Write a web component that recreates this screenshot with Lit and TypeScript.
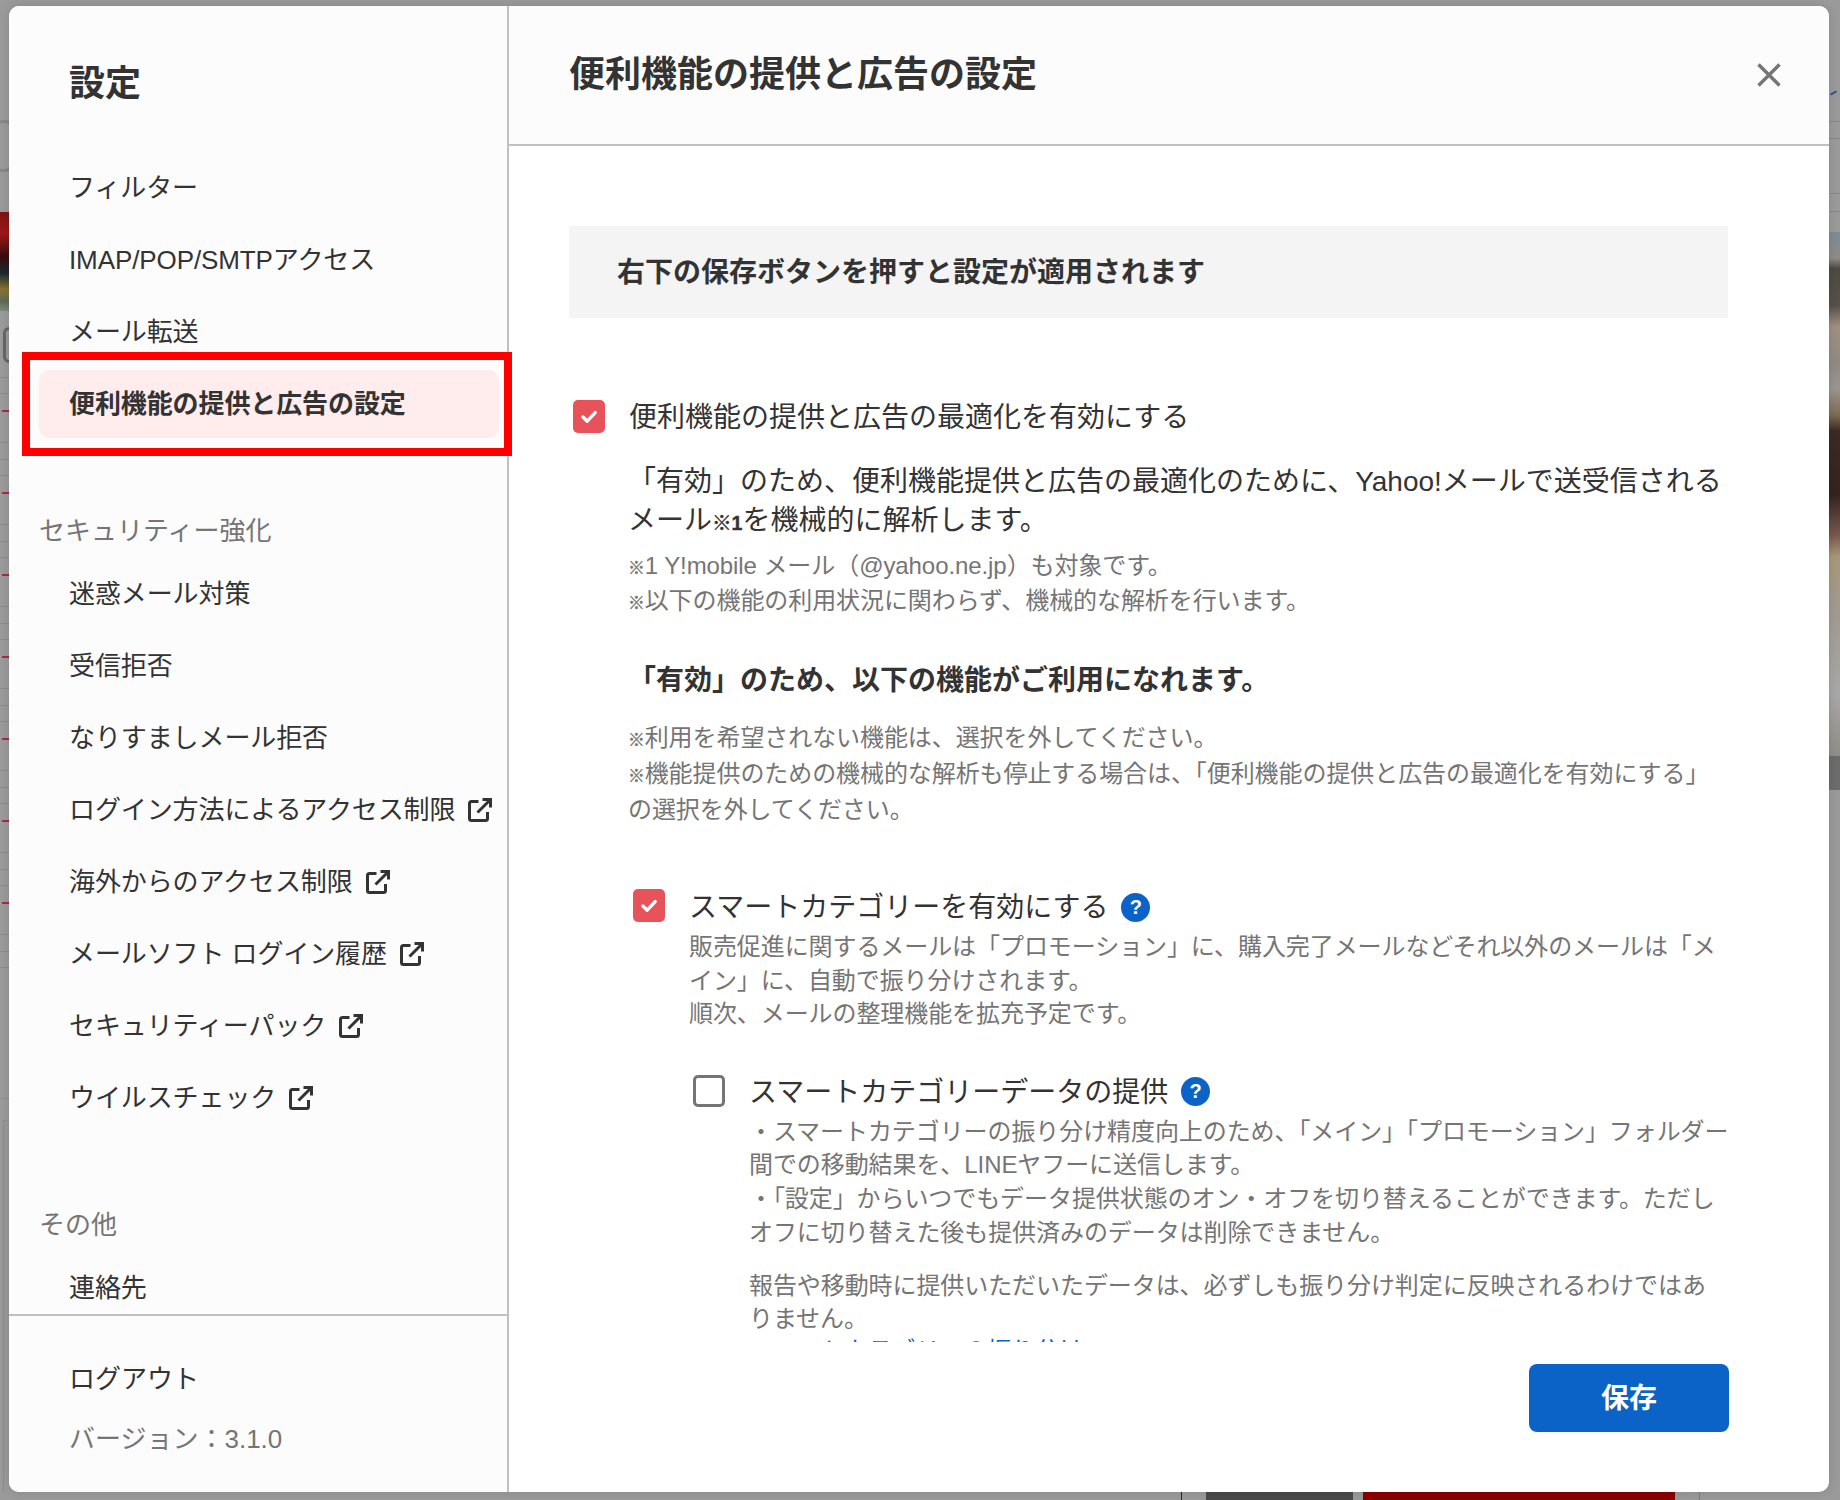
import { LitElement, html, css, svg } from "lit";
import { customElement } from "lit/decorators.js";

const extIcon = html`<svg class="ext" viewBox="0 0 24 25" width="24" height="25" fill="none" stroke="#333" stroke-width="3" aria-hidden="true">${svg`
  <path d="M10.5 4.5H3.5a2 2 0 0 0-2 2V21.5a2 2 0 0 0 2 2H17.5a2 2 0 0 0 2-2V15"/>
  <path d="M9.5 15.5 21.5 3.5"/>
  <path d="M14.5 2.5H22.5V10.5"/>`}</svg>`;

const check = html`<svg viewBox="0 0 32 33" width="32" height="33" fill="none" stroke="#fff" stroke-width="3.4" stroke-linecap="round" stroke-linejoin="round" aria-hidden="true">${svg`<path d="M10 17l4.2 4.2 8-8.6"/>`}</svg>`;

const help = html`<span class="help">?</span>`;

const k = (t: string) => html`<span class="kome">${t}</span>`;

@customElement("app-root")
export class AppRoot extends LitElement {
  static styles = css`
    :host {
      display: block;
      position: relative;
      width: 1840px;
      height: 1500px;
      overflow: hidden;
      background: #9a9a9a;
      font-family: "Liberation Sans", "Noto Sans CJK JP", sans-serif;
      color: #333;
    }
    /* dimmed page behind the dialog */
    .bg { position: absolute; }
    .bg-btn1 { left: -6px; top: 120px; width: 13px; height: 46px; border: 3px solid #868686; border-radius: 8px; }
    .bg-thumb {
      left: 0; top: 212px; width: 9px; height: 99px;
      background: linear-gradient(#7c1414 0%, #a01818 22%, #3a0c0c 45%, #1b2a30 62%, #8a7430 78%, #5f6a58 90%, #7c8a78 100%);
    }
    .bg-btn2 { left: 3px; top: 327px; width: 12px; height: 30px; border: 3px solid #666; border-radius: 6px; }
    .bg-rows {
      left: 0; top: 376px; width: 9px; height: 600px;
      background-image:
        linear-gradient(transparent 0 34px, #a8283c 34px 36px, transparent 36px),
        linear-gradient(transparent 0 1px, #8b8b8b 1px 2px, transparent 2px 17px, #8b8b8b 17px 18px, transparent 18px 66px, #8b8b8b 66px 67px, transparent 67px);
      background-size: 7px 82px, 9px 82px;
      background-repeat: repeat-y;
      background-position: 2px 0, 0 0;
    }
    .bg-low { left: 3px; top: 1120px; width: 3px; height: 372px; border-left: 1px solid #8a8a8a; border-top: 1px solid #8a8a8a; }
    .bg-line { left: 0; top: 1098px; width: 9px; height: 1px; background: #8e8e8e; }
    .bg-tick { left: 1830px; top: 92px; width: 7px; height: 2px; background: #2a4f8a; transform: rotate(-30deg); }
    .bg-rlines {
      left: 1829px; top: 121px; width: 11px; height: 91px;
      background-image:
        linear-gradient(#858585, #858585), linear-gradient(#858585, #858585),
        linear-gradient(#858585, #858585), linear-gradient(#858585, #858585);
      background-size: 11px 1px;
      background-repeat: no-repeat;
      background-position: 0 0, 0 17px, 0 72px, 0 90px;
    }
    .bg-photo {
      left: 1829px; top: 232px; width: 11px; height: 524px;
      background: linear-gradient(#7f8a96 0%, #8f8a84 5%, #4d4a44 7%, #55504a 14%, #a08f80 18%, #8f8a84 25%, #9a9590 30%, #7b6a52 35%, #3d2a24 38%, #33231f 50%, #7a5a50 58%, #a89878 62%, #a09a90 72%, #a7a7a7 88%, #8f8d88 100%);
    }
    .bg-dark { left: 1829px; top: 756px; width: 11px; height: 34px; background: #6c6c6c; }
    .bg-b1 { left: 1181px; top: 1492px; width: 1px; height: 8px; background: #8b0000; }
    .bg-b2 { left: 1206px; top: 1492px; width: 147px; height: 8px; background: #4a4a4a; }
    .bg-b3 { left: 1363px; top: 1492px; width: 312px; height: 8px; background: #8b0000; }
    .bg-b4 { left: 1699px; top: 1492px; width: 1px; height: 8px; background: #7c7c7c; }

    .modal {
      position: absolute;
      left: 9px;
      top: 6px;
      width: 1820px;
      height: 1486px;
      display: flex;
      background: #fff;
      border-radius: 10px;
      overflow: hidden;
      box-shadow: 0 0 10px rgba(0, 0, 0, 0.12);
    }
    /* sidebar */
    .side {
      width: 498px;
      flex: none;
      display: flex;
      flex-direction: column;
      background: #fcfcfc;
      border-right: 2px solid #c0c0c0;
    }
    .side-scroll {
      height: 1308px;
      flex: none;
      overflow: hidden;
      padding: 52px 0 0 30px;
      box-sizing: border-box;
    }
    .side-title {
      margin: 0 0 44px 30px;
      font-size: 36px;
      line-height: 52px;
      font-weight: 700;
    }
    .nav { display: flex; flex-direction: column; gap: 4px; width: 460px; }
    .item {
      height: 68px;
      box-sizing: border-box;
      padding: 0 0 5px 30px;
      display: flex;
      align-items: center;
      gap: 13px;
      font-size: 26px;
      letter-spacing: -0.1px;
      white-space: nowrap;
      border-radius: 10px;
    }
    .item.on { background: #ffecec; font-weight: 700; }
    .ext { position: relative; top: 2px; }
    .group { margin: 75px 0 11px 0; font-size: 26px; line-height: 36px; color: #757575; }
    .side-foot {
      flex: 1;
      border-top: 2px solid #c0c0c0;
      padding: 38px 0 0 60px;
    }
    .logout { font-size: 26px; line-height: 50px; }
    .version { margin-top: 10px; font-size: 26px; line-height: 50px; color: #757575; }

    /* main */
    .main { flex: 1; min-width: 0; display: flex; flex-direction: column; position: relative; }
    .head {
      flex: none;
      box-sizing: border-box;
      padding: 44px 48px 0 60px;
      display: flex;
      justify-content: space-between;
      align-items: flex-start;
      background: #fcfcfc;
      border-bottom: 2px solid #c0c0c0;
      height: 140px;
    }
    .head h1 { margin: 0; font-size: 36px; line-height: 50px; font-weight: 700; white-space: nowrap; }
    .close { margin-top: 13px; display: block; }
    .body {
      height: 1196px;
      flex: none;
      overflow: hidden;
      box-sizing: border-box;
      padding: 80px 101px 0 60px;
    }
    .notice {
      height: 92px;
      box-sizing: border-box;
      display: flex;
      align-items: center;
      padding: 0 0 4px 48px;
      background: #f4f4f4;
      font-size: 28px;
      font-weight: 700;
    }
    .row { display: flex; align-items: center; white-space: nowrap; font-size: 28px; line-height: 40px; }
    .box { width: 32px; height: 33px; flex: none; border-radius: 5px; box-sizing: border-box; display: block; margin-top: -4px; }
    .box.on { background: #e8525a; }
    .box.off { border: 3px solid #757575; height: 32px; }
    .r1 { margin-top: 80px; padding-left: 4px; gap: 24px; }
    .para { margin: 24px 0 0 59px; font-size: 28px; line-height: 39px; white-space: nowrap; }
    .note { margin: 8px 0 0 59px; font-size: 24px; line-height: 35px; letter-spacing: -0.08px; color: #757575; white-space: nowrap; }
    .sub { margin: 43px 0 0 59px; font-size: 28px; line-height: 40px; font-weight: 700; white-space: nowrap; }
    .note2 { margin-top: 19px; line-height: 36px; }
    .kome { font-size: 0.7em; font-weight: 700; line-height: 0; -webkit-text-stroke: 0.4px currentColor; }
    .r2 { margin: 60px 0 0 64px; gap: 24px; }
    .r2 .box { margin-top: -6px; }
    .desc { font-size: 24px; line-height: 33.6px; letter-spacing: -0.08px; color: #757575; white-space: nowrap; }
    .d2 { margin: 2px 0 0 120px; }
    .r3 { margin: 42px 0 0 124px; gap: 24px; }
    .d3 { margin: 2px 0 0 180px; }
    .d4 { margin: 19.5px 0 0 180px; }
    .link { display: block; margin-top: -1.5px; color: #0b63c8; }
    .help {
      width: 29px;
      height: 29px;
      flex: none;
      margin: -2px 0 0 -11px;
      border-radius: 50%;
      background: #0b63c8;
      color: #fff;
      font-size: 20px;
      line-height: 29px;
      font-weight: 700;
      text-align: center;
    }
    .foot {
      position: absolute;
      right: 111px;
      top: 1364px;
    }
    .save {
      display: block;
      width: 200px;
      height: 68px;
      padding: 0 0 4px;
      border: 0;
      border-radius: 8px;
      background: #0b63c8;
      color: #fff;
      font: 700 28px "Liberation Sans", "Noto Sans CJK JP", sans-serif;
    }
    .mark {
      position: absolute;
      left: 22px;
      top: 352px;
      width: 490px;
      height: 104px;
      box-sizing: border-box;
      border: 8px solid #f00;
      pointer-events: none;
    }
  `;

  render() {
    const top = ["フィルター", "IMAP/POP/SMTPアクセス", "メール転送"];
    const sec: [string, boolean][] = [
      ["迷惑メール対策", false],
      ["受信拒否", false],
      ["なりすましメール拒否", false],
      ["ログイン方法によるアクセス制限", true],
      ["海外からのアクセス制限", true],
      ["メールソフト ログイン履歴", true],
      ["セキュリティーパック", true],
      ["ウイルスチェック", true],
    ];
    return html`
      <div class="bg bg-btn1"></div>
      <div class="bg bg-thumb"></div>
      <div class="bg bg-btn2"></div>
      <div class="bg bg-rows"></div>
      <div class="bg bg-line"></div>
      <div class="bg bg-low"></div>
      <div class="bg bg-tick"></div>
      <div class="bg bg-rlines"></div>
      <div class="bg bg-photo"></div>
      <div class="bg bg-dark"></div>
      <div class="bg bg-b1"></div>
      <div class="bg bg-b2"></div>
      <div class="bg bg-b3"></div>
      <div class="bg bg-b4"></div>

      <div class="modal">
        <aside class="side">
          <div class="side-scroll">
            <h2 class="side-title">設定</h2>
            <div class="nav">
              ${top.map((t) => html`<div class="item">${t}</div>`)}
              <div class="item on">便利機能の提供と広告の設定</div>
            </div>
            <div class="group">セキュリティー強化</div>
            <div class="nav">
              ${sec.map(([t, e]) => html`<div class="item">${t}${e ? extIcon : ""}</div>`)}
            </div>
            <div class="group">その他</div>
            <div class="nav"><div class="item">連絡先</div></div>
          </div>
          <div class="side-foot">
            <div class="logout">ログアウト</div>
            <div class="version">バージョン：3.1.0</div>
          </div>
        </aside>
        <section class="main">
          <header class="head">
            <h1>便利機能の提供と広告の設定</h1>
            <svg class="close" viewBox="0 0 24 24" width="24" height="24" fill="none" stroke="#757575" stroke-width="3.4" aria-hidden="true">
              <path d="M1.5 1.5 22.5 22.5M22.5 1.5 1.5 22.5" />
            </svg>
          </header>
          <div class="body">
            <div class="notice">右下の保存ボタンを押すと設定が適用されます</div>
            <div class="row r1"><span class="box on">${check}</span>便利機能の提供と広告の最適化を有効にする</div>
            <p class="para">「有効」のため、便利機能提供と広告の最適化のために、Yahoo!メールで送受信される<br />メール${k("※1")}を機械的に解析します。</p>
            <p class="note">${k("※")}1 Y!mobile メール（@yahoo.ne.jp）も対象です。<br />${k("※")}以下の機能の利用状況に関わらず、機械的な解析を行います。</p>
            <p class="sub">「有効」のため、以下の機能がご利用になれます。</p>
            <p class="note note2">${k("※")}利用を希望されない機能は、選択を外してください。<br />${k("※")}機能提供のための機械的な解析も停止する場合は、「便利機能の提供と広告の最適化を有効にする」<br />の選択を外してください。</p>
            <div class="row r2"><span class="box on">${check}</span><span>スマートカテゴリーを有効にする</span>${help}</div>
            <p class="desc d2">販売促進に関するメールは「プロモーション」に、購入完了メールなどそれ以外のメールは「メ<br />イン」に、自動で振り分けされます。<br />順次、メールの整理機能を拡充予定です。</p>
            <div class="row r3"><span class="box off"></span><span>スマートカテゴリーデータの提供</span>${help}</div>
            <p class="desc d3">・スマートカテゴリーの振り分け精度向上のため、「メイン」「プロモーション」フォルダー<br />間での移動結果を、LINEヤフーに送信します。<br />・「設定」からいつでもデータ提供状態のオン・オフを切り替えることができます。ただし<br />オフに切り替えた後も提供済みのデータは削除できません。</p>
            <p class="desc d4">報告や移動時に提供いただいたデータは、必ずしも振り分け判定に反映されるわけではあ<br />りません。<br /><span class="link">スマートカテゴリーの振り分け</span></p>
          </div>
        </section>
      </div>
      <div class="foot"><button class="save">保存</button></div>
      <div class="mark"></div>
    `;
  }
}
